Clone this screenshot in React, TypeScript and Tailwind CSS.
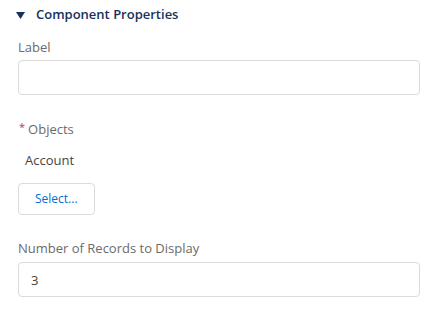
export default function App() {
  return (
    <div
      className="w-[436px] h-[318px] bg-white text-[13px] text-[#3e3e3c]"
      style={{ fontFamily: '"Open Sans", "Liberation Sans", sans-serif' }}
    >
      {/* Section header */}
      <div className="flex items-center h-[30px] pl-[16px]">
        <svg width="9" height="7" viewBox="0 0 9 7" className="mr-[11px]">
          <path d="M0 0h9L4.5 7z" fill="#16325c" />
        </svg>
        <span className="text-[13px] font-semibold text-[#16325c]">Component Properties</span>
      </div>

      <div className="pl-[18px] pr-[16px]">
        {/* Label */}
        <div className="mt-[7px]">
          <div className="text-[13px] text-[#6b6b6b] leading-[20px] mb-[3px]">Label</div>
          <input
            className="block w-full h-[35px] border border-[#dddbda] rounded-[4px] px-[12px] outline-none"
            defaultValue=""
          />
        </div>

        {/* Objects */}
        <div className="mt-[24px]">
          <div className="flex items-start text-[13px] text-[#6b6b6b] leading-[20px]">
            <span className="text-[#c23934] text-[11px] leading-[16px] ml-[1px] mr-[3px]">*</span>Objects
          </div>
          <div className="mt-[11px] pl-[7px] text-[13px] text-[#444444] leading-[20px]">Account</div>
          <button className="block mt-[13px] h-[32px] px-[16px] border border-[#dddbda] rounded-[4px] text-[12px] text-[#0070d2] bg-white">
            Select...
          </button>
        </div>

        {/* Number of records */}
        <div className="mt-[23px]">
          <div className="text-[13px] text-[#6b6b6b] leading-[20px] mb-[4px]">Number of Records to Display</div>
          <input
            className="block w-full h-[35px] border border-[#dddbda] rounded-[4px] px-[12px] outline-none text-[13px] text-[#444444]"
            defaultValue="3"
          />
        </div>
      </div>
    </div>
  )
}
